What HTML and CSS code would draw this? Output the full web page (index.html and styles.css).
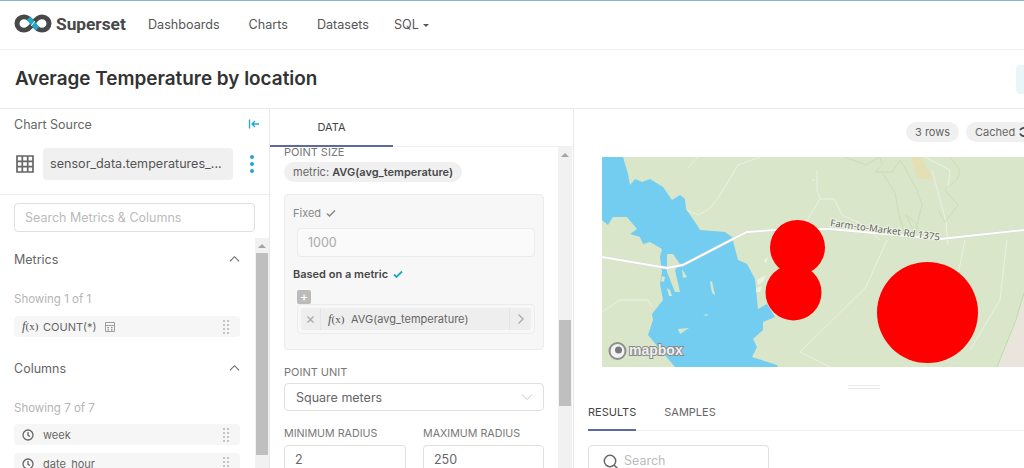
FILE: index.html
```html
<!DOCTYPE html>
<html lang="en">
<head>
<meta charset="utf-8">
<title>Average Temperature by location</title>
<link rel="stylesheet" href="styles.css">
</head>
<body>
<div class="app">
  <nav class="nav">
    <svg class="logo" viewBox="0 0 38 20" width="38" height="19" preserveAspectRatio="none">
      <path class="logo-dark" d="M19 10C16 5 13.500 3 10 3a7 7 0 0 0 0 14c3.500 0 6-2 9-7c3-5 5.500-7 9-7a7 7 0 0 1 0 14c-3.500 0-6-2-9-7" />
      <path class="logo-blue" d="M14.500 4.500C16 6 17.500 8 19 10c1.500 2 3 4 4.500 5.500" />
      <path class="logo-gap" d="M17.200 12.500 20.800 7.500" />
    </svg>
    <span class="brand">Superset</span>
    <a class="nav-link nav-first">Dashboards</a>
    <a class="nav-link">Charts</a>
    <a class="nav-link">Datasets</a>
    <a class="nav-link nav-sql">SQL <span class="caret"></span></a>
  </nav>
  <header class="title-bar">
    <h1>Average Temperature by location</h1>
    <span class="title-btn"></span>
  </header>
  <main class="columns">
    <aside class="source">
      <div class="source-head">
        <span>Chart Source</span>
        <svg class="collapse" viewBox="0 0 12 12" width="12" height="12"><path d="M1.500 1.500v9M11 6H4M7 3 4 6l3 3"/></svg>
      </div>
      <div class="dataset">
        <svg class="grid-icon" viewBox="0 0 18 18" width="18" height="18"><path d="M1 1h16v16H1zM1 6.300h16M1 11.700h16M6.300 1v16M11.700 1v16"/></svg>
        <span class="dataset-name">sensor_data.temperatures_...</span>
        <span class="kebab"><i></i><i></i><i></i></span>
      </div>
      <div class="search-wrap"><div class="search">Search Metrics &amp; Columns</div></div>
      <div class="source-list">
        <div class="list-body">
          <div class="sec-head sec-metrics"><span>Metrics</span><svg class="chev" viewBox="0 0 12 8" width="11" height="8"><path d="M1 6.500 6 1.500l5 5"/></svg></div>
          <div class="showing">Showing 1 of 1</div>
          <div class="item">
            <span class="fx"><i>f</i>(x)</span><span class="item-name">COUNT(*)</span>
            <svg class="calc" viewBox="0 0 10 10" width="10" height="10"><path d="M.5.500h9v9h-9zM.5 3.500h9"/><path class="calc-dots" d="M2.500 5h1.500v1.200H2.500zM6 5h1.500v1.200H6zM2.500 7.300h1.500v1.200H2.500zM6 7.300h1.500v1.200H6z"/></svg>
            <span class="drag"></span>
          </div>
          <div class="sec-head sec-columns"><span>Columns</span><svg class="chev" viewBox="0 0 12 8" width="11" height="8"><path d="M1 6.500 6 1.500l5 5"/></svg></div>
          <div class="showing">Showing 7 of 7</div>
          <div class="item item-next">
            <svg class="clock" viewBox="0 0 12 12" width="12" height="12"><circle cx="6" cy="6" r="5"/><path d="M6 3v3.300l2 1.200"/></svg>
            <span class="item-name">week</span><span class="drag"></span>
          </div>
          <div class="item item-next">
            <svg class="clock" viewBox="0 0 12 12" width="12" height="12"><circle cx="6" cy="6" r="5"/><path d="M6 3v3.300l2 1.200"/></svg>
            <span class="item-name">date_hour</span><span class="drag"></span>
          </div>
        </div>
        <div class="scroll scroll-left"><span class="arrow"></span><span class="thumb thumb-left"></span></div>
      </div>
    </aside>

    <section class="controls">
      <div class="tabs-top"><span class="tab-data">DATA</span></div>
      <div class="controls-body">
        <div class="form">
          <div class="label label-first">POINT SIZE</div>
          <div class="metric-pill">metric: <b>AVG(avg_temperature)</b></div>
          <div class="size-box">
            <div class="opt">Fixed <svg class="tick" viewBox="0 0 10 8" width="10" height="8"><path d="M1 4.500 3.500 7 9 1.500"/></svg></div>
            <div class="field field-fixed">1000</div>
            <div class="opt opt-on">Based on a metric <svg class="tick tick-on" viewBox="0 0 10 8" width="10" height="8"><path d="M1 4.500 3.500 7 9 1.500"/></svg></div>
            <div class="plus">+</div>
            <div class="metric-box">
              <div class="metric-chip">
                <span class="chip-x">×</span>
                <span class="fx chip-fx"><i>f</i>(x)</span>
                <span class="chip-name">AVG(avg_temperature)</span>
                <span class="chip-end"><svg class="chip-arrow" viewBox="0 0 8 12" width="8" height="12"><path d="M1.500 1.500 6 6l-4.500 4.500"/></svg></span>
              </div>
            </div>
          </div>
          <div class="label label-unit">POINT UNIT</div>
          <div class="select">Square meters<svg class="select-chev" viewBox="0 0 12 8" width="12" height="8"><path d="M1 1.500 6 6.500l5-5"/></svg></div>
          <div class="radius">
            <div><div class="label">MINIMUM RADIUS</div><div class="field-num">2</div></div>
            <div><div class="label">MAXIMUM RADIUS</div><div class="field-num">250</div></div>
          </div>
        </div>
        <div class="scroll scroll-mid"><span class="arrow"></span><span class="thumb thumb-mid"></span></div>
      </div>
    </section>

    <section class="chart">
      <div class="badges"><span class="badge">3 rows</span><span class="badge badge-cached">Cached <svg class="refresh" viewBox="0 0 12 12" width="12" height="12"><path d="M10 4.500A4.500 4.500 0 0 0 2 4M2 7.500A4.500 4.500 0 0 0 10 8"/></svg></span></div>
      <svg class="map" viewBox="602 157 422 210" width="422" height="210">
        <rect class="land" x="602" y="157" width="422" height="210"/>
        <path class="beige" d="M1024 293 1016 320 997 367H1024Z"/>
        <path class="green-line" d="M1024 293 1016 320 997 367"/>
        <path class="orange" d="M911 157H921L933 179H917Z"/>
        <path class="water" d="M602 157H623L628 174 630 185 635 179 642 182 650 179 663 187 672 200 680 195 685 199 686 209 697 225 700 230 725 232 732 237 738 260 747 264 755 279 758 309 767 304 775 317 763 322 763 330 753 339 757 347 752 357 777 365 778 367H675L648 335 653 320 652 314 663 300 660 284 662 272 660 257 662 249 650 242 643 244 640 237 630 234 637 229 627 217 613 217 608 225 602 220Z"/>
        <path class="land" d="M667 254 673 254 680 264 675 270 680 292 675 292 667 272ZM682 269 687 277 683 278ZM662 276 665 277 664 282 661 281ZM667 288 670 290 672 296 669 296Z"/>
        <path class="land" d="M710 282 712 281 715 295 716 296 712 293ZM678 329 689 328 680 334ZM703 315 708 314 707 316Z"/>
        <g class="trail">
          <path d="M698 157 688 168M760 157 738 165 728 182 718 198 709 209 698 215 687 210"/>
          <path d="M817 170 817 190 820 199 805 224M820 199 834 199 842 215 858 222 880 240"/>
          <path d="M815 180 812 180"/>
          <path d="M925 157 950 170 948 190M932 170 946 222 948 245M965 240 950 315 940 345"/>
          <path d="M602 312 620 300 648 300 652 307"/>
          <path d="M887 240 866 287 800 352 830 367"/>
          <path d="M1007 240 1000 300 970 350"/>
        </g>
        <g class="contour">
          <path d="M845 157 866 165 880 157M880 157 882 165 875 172 892 172 900 160 905 168 917 190 922 205 915 233 905 235 899 215 895 193 882 172"/>
          <path d="M950 157 960 170 958 178 945 190 958 205 945 222 938 210"/>
          <path d="M906 215 915 222 920 233 912 228Z"/>
        </g>
        <path class="road-out" d="M602 257 667 268 683 265 733 239 747 232 790 229 830 229 885 234 940 239 1024 230"/>
        <path class="road" d="M602 257 667 268 683 265 733 239 747 232 790 229 830 229 885 234 940 239 1024 230"/>
        <g class="land-white">
          <path d="M764 260 768 257 766 264ZM757 280 766 275 763 282 758 285ZM757 288 762 286 760 292 756 292Z"/>
        </g>
        <text class="road-label" transform="translate(830 226) rotate(7.500)">Farm-to-Market Rd 1375</text>
        <circle class="dot" cx="797.500" cy="247.500" r="27.500"/>
        <circle class="dot" cx="793.500" cy="292.500" r="28"/>
        <circle class="dot" cx="927.500" cy="312.500" r="50.500"/>
        <circle class="mb-ring" cx="617.500" cy="351" r="8"/>
        <circle class="mb-dot" cx="618.500" cy="350" r="3.500"/>
        <text class="mb-text" x="629" y="355">mapbox</text>
      </svg>
      <div class="handle"></div>
      <div class="result-tabs"><span class="rtab rtab-on">RESULTS</span><span class="rtab">SAMPLES</span></div>
      <div class="r-search">
        <svg class="r-icon" viewBox="0 0 16 16" width="16" height="16"><circle cx="7" cy="7" r="5.700"/><path d="M11 11l4 4"/></svg>
        <span>Search</span>
      </div>
    </section>
  </main>
</div>
</body>
</html>
```
FILE: styles.css
```css
* { box-sizing: border-box; }
html, body { margin: 0; height: 100%; overflow: hidden; background: #fff; }
body { font-family: Inter, "Liberation Sans", sans-serif; color: #666; font-size: 12.500px; }
.app { width: 1024px; height: 468px; display: flex; flex-direction: column; overflow: hidden; border-top: 1px solid #8db4d6; }

.nav { height: 49px; flex: none; display: flex; align-items: center; padding: 0 0 2px 14px; border-bottom: 1px solid #f0f0f0; }
.logo { flex: none; margin-top: -2px; }
.logo-dark { fill: none; stroke: #484848; stroke-width: 5; }
.logo-blue { fill: none; stroke: #20a7c9; stroke-width: 5; }
.logo-gap { fill: none; stroke: #fff; stroke-width: 1; }
.brand { font-family: Roboto, sans-serif; font-weight: 700; font-size: 17.300px; color: #484848; margin-left: 4px; width: 70px; white-space: nowrap; }
.nav-link { font-size: 12.600px; color: #555; margin-left: 29px; white-space: nowrap; }
.nav-first { margin-left: 22px; }
.nav-sql { margin-left: 25px; }
.caret { display: inline-block; vertical-align: 2px; margin-left: 1px; border: 3px solid transparent; border-top-color: #555; border-bottom: 0; }

.title-bar { height: 59px; flex: none; display: flex; align-items: center; justify-content: space-between; padding-left: 15px; border-bottom: 1px solid #e8e8e8; }
.title-bar h1 { margin: 0 0 1px; font-size: 18.900px; font-weight: 600; color: #323232; }
.title-btn { width: 8px; height: 29px; background: #e9f6f9; border-radius: 4px 0 0 4px; }

.columns { flex: 1; min-height: 0; display: flex; }

.source { width: 270px; flex: none; border-right: 1px solid #e8e8e8; display: flex; flex-direction: column; }
.source-head { display: flex; align-items: center; justify-content: space-between; padding: 0 9px 0 14px; height: 31px; color: #666; font-size: 12.500px; }
.collapse { fill: none; stroke: #20a7c9; stroke-width: 1.300; margin-top: -2px; }
.dataset { display: flex; align-items: center; padding: 0 0 8px 16px; border-bottom: 1px solid #ececec; margin-top: 1px; height: 54px; }
.grid-icon { fill: none; stroke: #666; stroke-width: 1.700; flex: none; margin-top: 1px; }
.dataset-name { margin-left: 9px; width: 190px; height: 32px; line-height: 32px; background: #f0f0f0; border-radius: 4px; padding-left: 7px; color: #555; font-size: 12.600px; white-space: nowrap; overflow: hidden; }
.kebab { margin-left: 17px; display: flex; flex-direction: column; gap: 3px; }
.kebab i { width: 4px; height: 4px; border-radius: 50%; background: #20a7c9; display: block; }
.search-wrap { padding: 8px 14px 0; }
.search { height: 29px; width: 241px; border: 1px solid #e0e0e0; border-radius: 4px; padding-left: 10px; line-height: 27px; color: #bbb; font-size: 12.500px; }
.source-list { flex: 1; min-height: 0; display: flex; margin-top: 6px; overflow: hidden; }
.list-body { flex: 1; padding: 0 15px 0 14px; min-width: 0; }
.sec-head { display: flex; justify-content: space-between; align-items: center; height: 18px; color: #666; font-size: 12.500px; }
.sec-metrics { margin-top: 12px; }
.sec-columns { margin-top: 22px; }
.chev { fill: none; stroke: #666; stroke-width: 1.200; }
.showing { margin-top: 23px; height: 16px; line-height: 16px; font-size: 11.500px; color: #b5b5b5; }
.item { display: flex; align-items: center; height: 21px; margin-top: 9px; background: #f6f6f6; border-radius: 4px; padding-left: 8px; color: #666; font-size: 11px; }
.item-next { margin-top: 8px; }
.fx { font-family: "Liberation Serif", serif; font-size: 11px; color: #555; width: 21px; flex: none; white-space: nowrap; }
.fx i { font-size: 12.500px; }
.clock { fill: none; stroke: #666; stroke-width: 1.300; margin-right: 9px; flex: none; }
.item-name { color: #666; }
.calc { margin-left: 8px; fill: none; stroke: #888; stroke-width: .8; }
.calc-dots { fill: #888; stroke: none; }
.drag { width: 8px; height: 16px; margin-left: auto; margin-right: 10px; background-image: radial-gradient(circle, #c4c4c4 1px, transparent 1.200px); background-size: 4px 4px; flex: none; }

.scroll { width: 14px; flex: none; background: #f1f1f1; display: flex; flex-direction: column; align-items: center; position: relative; }
.arrow { flex: none; margin-top: 6px; border: 4px solid transparent; border-bottom: 4px solid #a5a5a5; border-top: 0; }
.thumb { position: absolute; left: 1px; width: 12px; background: #bfbfbf; }
.thumb-left { top: 15px; height: 202px; }
.thumb-mid { top: 173px; height: 86px; }

.controls { width: 304px; flex: none; border-right: 1px solid #e8e8e8; display: flex; flex-direction: column; }
.tabs-top { height: 38px; flex: none; border-bottom: 1px solid #f0f0f0; }
.tab-data { display: block; width: 123px; height: 38px; border-bottom: 2px solid #5e6a9d; text-align: center; line-height: 37px; font-size: 11px; color: #444; }
.controls-body { flex: 1; min-height: 0; display: flex; justify-content: space-between; overflow: hidden; }
.form { width: 288px; padding: 0 14px; }
.label { font-size: 11px; color: #777; height: 14px; line-height: 14px; white-space: nowrap; }
.label-first { margin-top: -2px; }
.metric-pill { display: inline-block; margin-top: 3px; height: 20px; line-height: 20px; padding: 0 9px; border-radius: 10px; background: #f0f0f0; font-size: 11px; color: #666; white-space: nowrap; }
.metric-pill b { color: #484848; font-weight: 600; }
.size-box { margin-top: 12px; height: 156px; width: 260px; background: #f7f7f7; border: 1px solid #ececec; border-radius: 4px; padding: 11px 8px 0 8px; }
.opt { font-size: 11px; color: #888; height: 14px; line-height: 14px; display: flex; align-items: center; gap: 5px; }
.opt-on { color: #484848; font-weight: 600; margin-top: 10px; }
.tick { fill: none; stroke: #888; stroke-width: 1.500; }
.tick-on { stroke: #20a7c9; stroke-width: 1.800; }
.field { margin: 8px 0 0 4px; width: 238px; height: 29px; background: #fafafa; border: 1px solid #ececec; border-radius: 4px; line-height: 27px; padding-left: 10px; color: #aaa; font-size: 12.500px; }
.plus { margin: 9px 0 0 4px; width: 14px; height: 14px; background: #bbb; border-radius: 2px; color: #fff; text-align: center; line-height: 13px; font-size: 13px; }
.metric-box { margin-left: 4px; width: 238px; height: 30px; border: 1px solid #ececec; border-radius: 4px; padding: 3px; }
.metric-chip { display: flex; align-items: center; height: 22px; background: #eee; border-radius: 3px; color: #666; font-size: 11px; }
.chip-x { width: 20px; text-align: center; border-right: 1px solid #e4e4e4; height: 22px; line-height: 21px; font-size: 15px; color: #aaa; flex: none; }
.chip-fx { margin-left: 7px; width: 23px; }
.chip-name { flex: 1; white-space: nowrap; }
.chip-end { width: 22px; height: 22px; border-left: 1px solid #e4e4e4; display: flex; align-items: center; justify-content: center; flex: none; }
.chip-arrow { fill: none; stroke: #aaa; stroke-width: 1.300; }
.label-unit { margin-top: 15px; }
.select { margin-top: 4px; display: flex; align-items: center; justify-content: space-between; width: 260px; height: 28px; border: 1px solid #e0e0e0; border-radius: 4px; padding: 0 10px 0 11px; font-size: 12.500px; color: #666; }
.select-chev { fill: none; stroke: #c5c5c5; stroke-width: 1; }
.radius { display: grid; grid-template-columns: 122px 121px; column-gap: 17px; margin-top: 16px; width: 260px; }
.radius .label { font-size: 10.700px; }
.field-num { margin-top: 4px; height: 29px; border: 1px solid #e0e0e0; border-radius: 4px; padding-left: 10px; line-height: 27px; font-size: 12.500px; color: #666; }
.scroll-mid { margin-right: 1px; }

.chart { flex: 1; min-width: 0; display: flex; flex-direction: column; overflow: hidden; }
.badges { display: flex; gap: 7px; padding: 13px 0 0 332px; height: 48px; white-space: nowrap; flex: none; }
.badge { height: 20px; line-height: 20px; background: #f0f0f0; border-radius: 10px; padding: 0 9px; font-size: 11px; color: #666; flex: none; display: flex; align-items: center; gap: 3px; }
.badge-cached { padding-right: 20px; }
.refresh { fill: none; stroke: #444; stroke-width: 1.800; flex: none; }
.map { display: block; flex: none; margin-left: 28px; }
.land { fill: #d9e6c9; }
.beige { fill: #e9e5dc; }
.green-line { fill: none; stroke: #b9e0a3; stroke-width: 1; }
.orange { fill: #e5e0b4; }
.water { fill: #73cdf1; }
.trail { fill: none; stroke: #eef2e6; stroke-width: .9; }
.contour { fill: none; stroke: #c8dcb4; stroke-width: .9; }
.road-out { fill: none; stroke: #d8dcd8; stroke-width: 2.800; }
.road { fill: none; stroke: #fff; stroke-width: 1.800; }
.land-white { fill: #eef2e6; }
.road-label { font-family: "Open Sans", sans-serif; font-size: 9.500px; fill: #555; stroke: #eef3e5; stroke-width: 2px; paint-order: stroke; letter-spacing: .12px; }
.dot { fill: #f00; }
.mb-ring { fill: #f2f2f2; stroke: #8e8e8e; stroke-width: 2; }
.mb-dot { fill: #7a7a7a; }
.mb-text { font-family: "Liberation Sans", sans-serif; font-weight: 700; font-size: 14px; fill: #efefef; stroke: #8a8a8a; stroke-width: 2px; paint-order: stroke; }
.handle { width: 32px; height: 4px; margin: 18px 0 0 274px; border-top: 1px solid #e8e8e8; border-bottom: 1px solid #e8e8e8; flex: none; }
.result-tabs { margin: 14px 0 0 14px; height: 28px; flex: none; display: flex; gap: 28px; border-bottom: 1px solid #f0f0f0; }
.rtab { height: 28px; font-size: 11px; color: #666; line-height: 18px; }
.rtab-on { color: #444; border-bottom: 2px solid #5e6a9d; }
.r-search { margin: 14px 0 0 14px; width: 181px; height: 40px; flex: none; border: 1px solid #e0e0e0; border-radius: 4px; padding: 7px 0 0 14px; display: flex; align-items: flex-start; gap: 5px; color: #bbb; font-size: 12.500px; }
.r-icon { fill: none; stroke: #666; stroke-width: 1.500; margin-top: 1px; }
```
